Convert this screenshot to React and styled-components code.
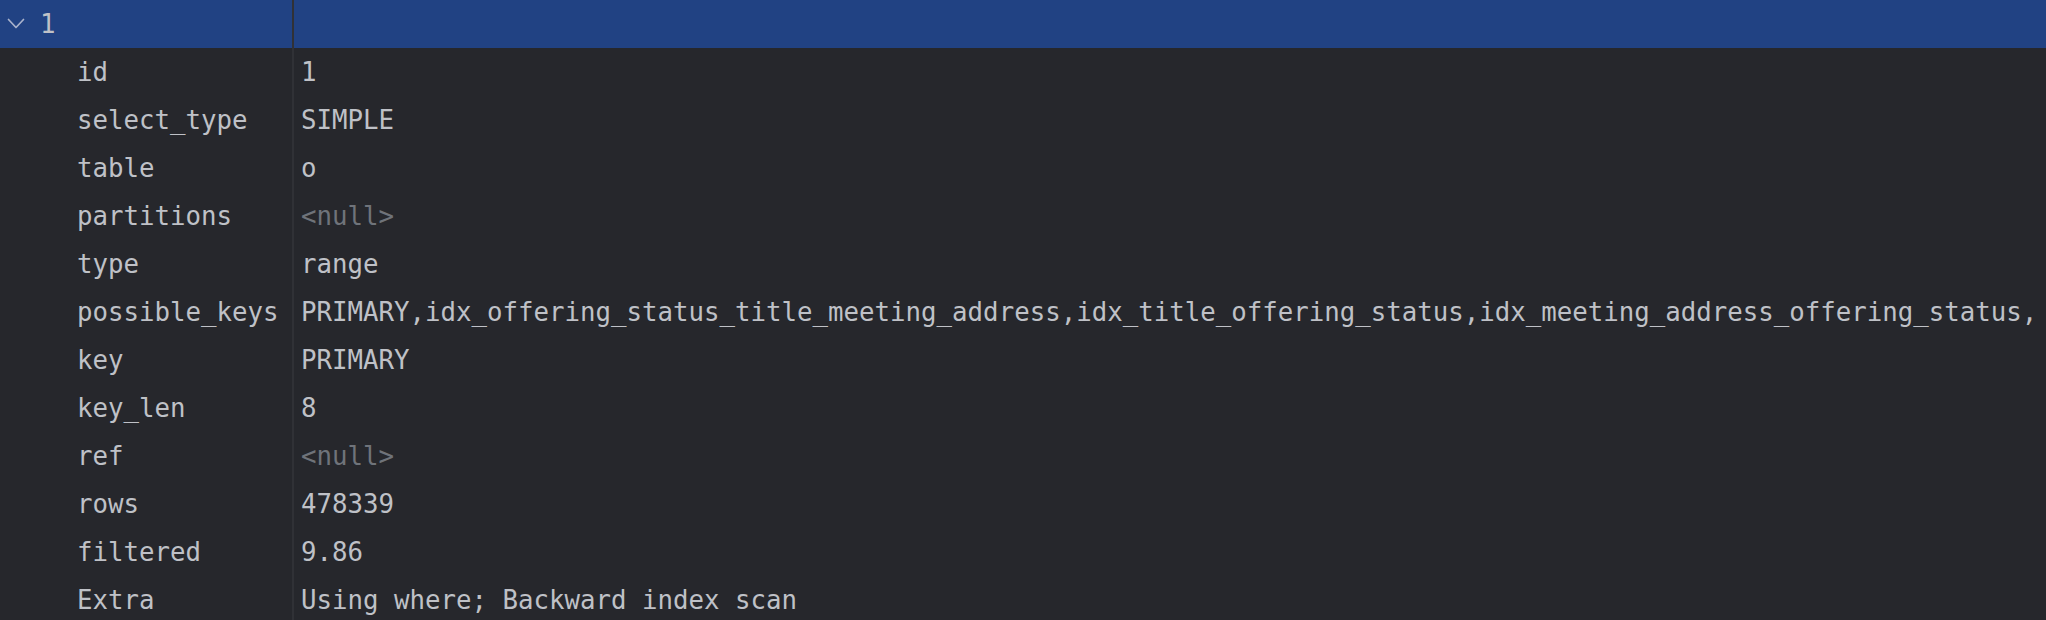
import styled, { createGlobalStyle } from "styled-components";

const Global = createGlobalStyle`
  html, body {
    margin: 0;
    padding: 0;
    background: #26272c;
    overflow: hidden;
  }
`

const Table = styled.div`
  width: 2046px;
  background: #26272c;
  font-family: "DejaVu Sans Mono", "Liberation Mono", monospace;
  font-size: 25.75px;
  color: #bfc1c7;
`

const Row = styled.div`
  display: grid;
  grid-template-columns: 292px 1fr;
  height: 48px;
  align-items: stretch;
  background: ${p => p.selected ? "#214283" : "transparent"};
`

const KeyCell = styled.div`
  display: flex;
  align-items: center;
  padding-left: ${p => p.header ? "7px" : "77px"};
  gap: 15px;
  white-space: nowrap;
`

const ValueCell = styled.div`
  display: flex;
  align-items: center;
  border-left: 2px solid #303136;
  padding-left: 7px;
  white-space: nowrap;
  overflow: hidden;
  color: ${p => p.muted ? "#6f737a" : "#bfc1c7"};
`

const Chevron = () => (
  <svg width="18" height="12" viewBox="0 0 18 12" fill="none">
    <path d="M1.5 1.5l7.5 8 7.5-8" stroke="#aab3cc" strokeWidth="1.7" strokeLinecap="round" strokeLinejoin="round" />
  </svg>
)

const data = [
  ["id", "1"],
  ["select_type", "SIMPLE"],
  ["table", "o"],
  ["partitions", null],
  ["type", "range"],
  ["possible_keys", "PRIMARY,idx_offering_status_title_meeting_address,idx_title_offering_status,idx_meeting_address_offering_status,"],
  ["key", "PRIMARY"],
  ["key_len", "8"],
  ["ref", null],
  ["rows", "478339"],
  ["filtered", "9.86"],
  ["Extra", "Using where; Backward index scan"],
]

export default function App() {
  return (
    <>
      <Global />
      <Table>
        <Row selected>
          <KeyCell header>
            <Chevron />
            <span>1</span>
          </KeyCell>
          <ValueCell />
        </Row>
        {data.map(([k, v]) => (
          <Row key={k}>
            <KeyCell>{k}</KeyCell>
            <ValueCell muted={v === null}>{v === null ? "<null>" : v}</ValueCell>
          </Row>
        ))}
      </Table>
    </>
  )
}
